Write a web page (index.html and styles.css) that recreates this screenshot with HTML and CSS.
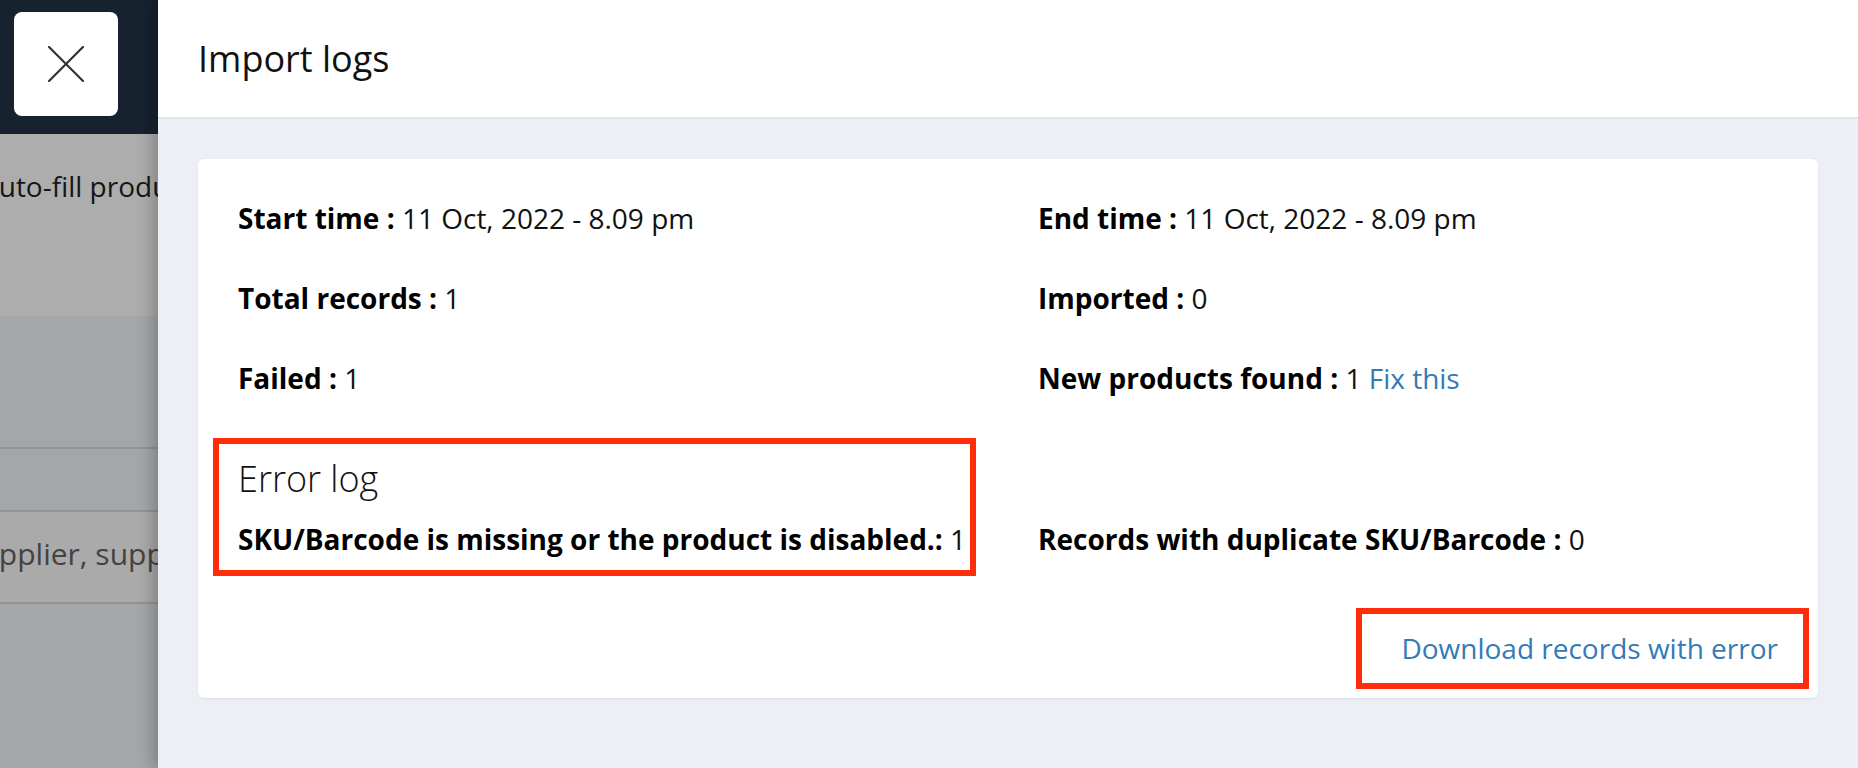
FILE: index.html
```html
<!DOCTYPE html>
<html lang="en">
<head>
<meta charset="utf-8">
<title>Import logs</title>
<link rel="stylesheet" href="styles.css">
</head>
<body>
<div class="app">
  <aside class="backdrop">
    <div class="backdrop-top">
      <button class="close-btn" aria-label="Close">
        <svg width="36" height="36" viewBox="0 0 36 36"><path d="M1 1 L35 35 M35 1 L1 35" stroke="#333" stroke-width="2.2" fill="none" stroke-linecap="square"/></svg>
      </button>
    </div>
    <div class="backdrop-band">
      <p class="bg-text">Auto-fill products</p>
    </div>
    <div class="backdrop-table">
      <div class="bg-head"></div>
      <div class="bg-row bg-row-short"></div>
      <div class="bg-row bg-row-input"><p class="bg-placeholder">Supplier, supp</p></div>
      <div class="bg-row bg-row-fill"></div>
    </div>
  </aside>
  <section class="panel">
    <header class="panel-header">
      <h1 class="panel-title">Import logs</h1>
    </header>
    <div class="panel-body">
      <div class="card">
        <div class="stats">
          <div class="stat"><b>Start time :</b> 11 Oct, 2022 - 8.09 pm</div>
          <div class="stat"><b>End time :</b> 11 Oct, 2022 - 8.09 pm</div>
          <div class="stat"><b>Total records :</b> 1</div>
          <div class="stat"><b>Imported :</b> 0</div>
          <div class="stat"><b>Failed :</b> 1</div>
          <div class="stat"><b>New products found :</b> 1 <a class="link" href="#">Fix this</a></div>
          <div class="error-block annotated">
            <h2 class="error-title">Error log</h2>
            <div class="stat"><b>SKU/Barcode is missing or the product is disabled.:</b> 1</div>
          </div>
          <div class="stat stat-bottom"><b>Records with duplicate SKU/Barcode :</b> 0</div>
        </div>
        <div class="actions">
          <a class="link download-link annotated" href="#">Download records with error</a>
        </div>
      </div>
    </div>
  </section>
</div>
</body>
</html>
```
FILE: styles.css
```css
* { box-sizing: border-box; }
html, body { margin: 0; padding: 0; height: 100%; }
body {
  font-family: "Open Sans", "Noto Sans", "Liberation Sans", sans-serif;
  color: #111;
  background: #a5a6a7;
  overflow: hidden;
}
.app {
  display: flex;
  height: 768px;
}

/* left dimmed page */
.backdrop {
  width: 158px;
  flex: 0 0 158px;
  display: flex;
  flex-direction: column;
  overflow: hidden;
}
.backdrop-top {
  height: 134px;
  background: #17222f;
  padding: 12px 0 0 14px;
}
.close-btn {
  width: 104px;
  height: 104px;
  border: 0;
  border-radius: 8px;
  background: #fff;
  display: flex;
  align-items: center;
  justify-content: center;
  padding: 0;
}
.backdrop-band {
  height: 182px;
  background: #adadad;
  padding-top: 32px;
}
.bg-text, .bg-placeholder {
  margin: 0 0 0 -19px;
  font-size: 28px;
  line-height: 40px;
  white-space: nowrap;
  color: #161616;
}
.bg-placeholder {
  margin-left: -36px;
  font-size: 30px;
  color: #434343;
}
.backdrop-table {
  flex: 1;
  display: flex;
  flex-direction: column;
  background: #a5a6a7;
}
.bg-head { height: 131px; }
.bg-row { border-top: 2px solid #8f9596; }
.bg-row-short { height: 63px; }
.bg-row-input {
  height: 92px;
  padding-top: 22px;
  background: #aaaaaa;
}
.bg-row-fill { flex: 1; }

/* slide-in panel */
.panel {
  flex: 1;
  background: #eceff3;
  position: relative;
  z-index: 1;
  box-shadow: -6px 0 14px rgba(0, 0, 0, 0.22);
  display: flex;
  flex-direction: column;
}
.panel-header {
  height: 119px;
  background: #fff;
  border-bottom: 2px solid #e3e5e8;
  display: flex;
  align-items: center;
  padding: 0 40px;
}
.panel-title {
  margin: 0;
  font-size: 36px;
  line-height: 40px;
  font-weight: 400;
  color: #111;
}
.panel-body {
  padding: 40px;
}
.card {
  background: #fff;
  border-radius: 6px;
  box-shadow: 0 1px 3px rgba(0, 0, 0, 0.07);
  padding: 39px 40px 30px;
}
.stats {
  display: grid;
  grid-template-columns: 800px 1fr;
  row-gap: 40px;
}
.stat {
  font-size: 28px;
  line-height: 40px;
  color: #111;
  white-space: nowrap;
}
.stat b {
  font-weight: 700;
  color: #000;
}
.link {
  color: #337ab7;
  text-decoration: none;
}
.error-block {
  margin-top: 21px;
}
.error-title {
  margin: 0 0 20px;
  font-size: 36px;
  line-height: 40px;
  font-weight: 300;
  color: #111;
}
.stat-bottom {
  align-self: end;
}
.actions {
  margin-top: 69px;
  text-align: right;
}
.download-link {
  display: inline-block;
  font-size: 28px;
  line-height: 40px;
}

/* red annotation frames drawn over the content */
.annotated { position: relative; }
.annotated::after {
  content: "";
  position: absolute;
  border: 6px solid #ff2d0a;
  pointer-events: none;
}
.error-block::after {
  top: -21px;
  left: -25px;
  right: 62px;
  bottom: -17px;
}
.download-link::after {
  top: -20px;
  left: -45px;
  right: -31px;
  bottom: -21px;
}
```
